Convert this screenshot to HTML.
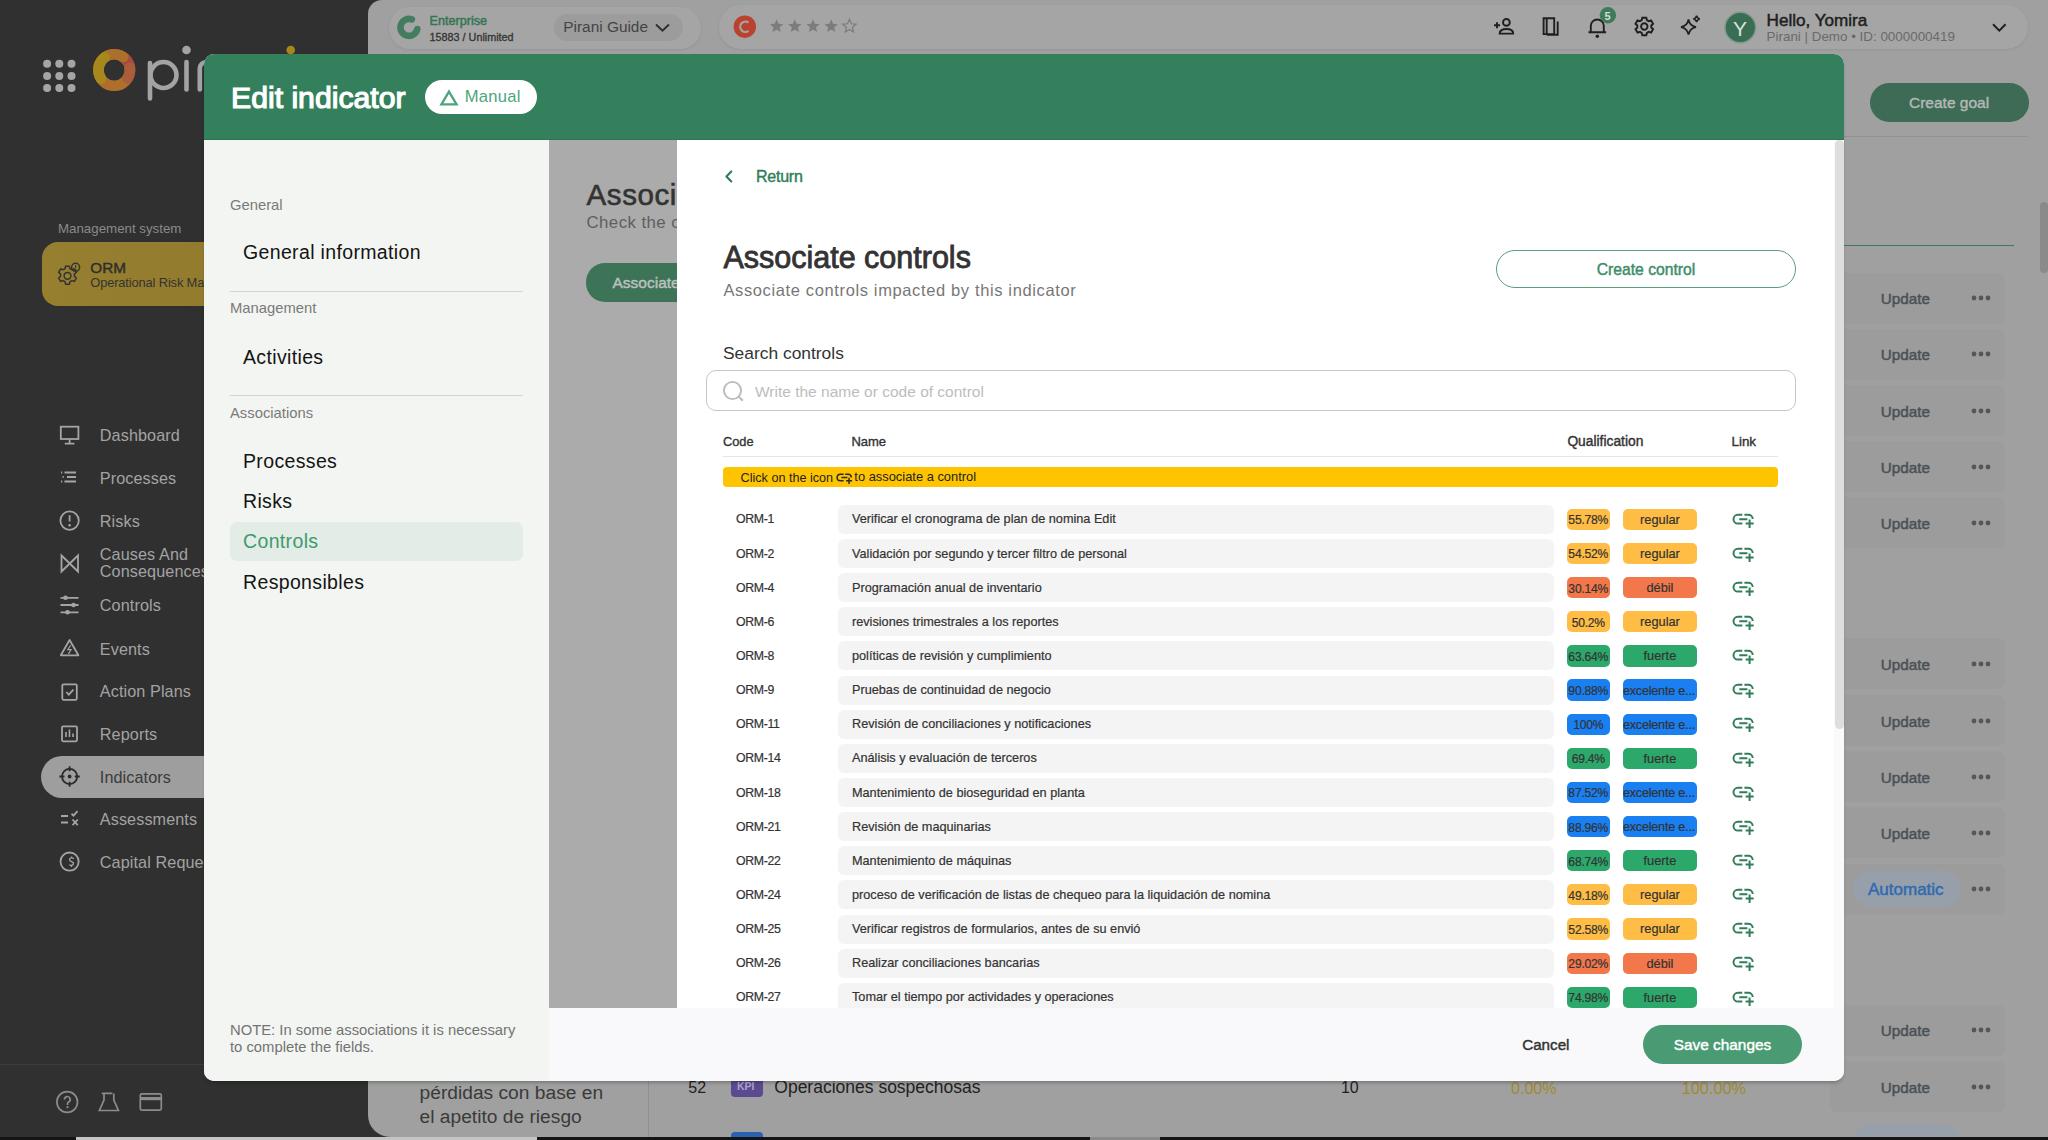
<!DOCTYPE html><html><head><meta charset="utf-8"><style>
*{box-sizing:border-box;margin:0;padding:0}
html,body{width:2048px;height:1140px;overflow:hidden}
body{position:relative;background:#303030;font-family:"Liberation Sans",sans-serif;color:#222}
.a{position:absolute;white-space:nowrap;line-height:1}
svg{position:absolute;overflow:visible}
.ctr{text-align:center}
</style></head><body>
<div class="a" style="left:0;top:0;width:380px;height:1140px;background:#303030"></div>
<svg width="2048" height="1140" style="left:0;top:0"><g fill="#a5a5a5"><circle cx="47.1" cy="63.7" r="4"/><circle cx="47.1" cy="75.9" r="4"/><circle cx="47.1" cy="88" r="4"/><circle cx="59.3" cy="63.7" r="4"/><circle cx="59.3" cy="75.9" r="4"/><circle cx="59.3" cy="88" r="4"/><circle cx="71.5" cy="63.7" r="4"/><circle cx="71.5" cy="75.9" r="4"/><circle cx="71.5" cy="88" r="4"/></g><g fill="none" stroke-width="10.6"><circle cx="114.2" cy="70" r="15.8" stroke="#ad6f2b"/><path d="M122.10 56.32A15.8 15.8 0 0 1 130.00 70.00" stroke="#a8493f" stroke-linecap="butt"/><path d="M129.85 67.80A15.8 15.8 0 0 1 127.60 78.37" stroke="#a95d3b" stroke-linecap="round"/><path d="M104.69 57.38A15.8 15.8 0 0 1 123.26 57.06" stroke="#ad6f2b" stroke-linecap="round"/><path d="M100.95 78.61A15.8 15.8 0 0 1 104.69 57.38" stroke="#a6881c" stroke-linecap="round"/></g><g fill="none" stroke="#a3a3a3" stroke-width="4.6" stroke-linecap="round"><path d="M150 63 V98.5"/><circle cx="163.5" cy="75" r="13"/><path d="M186.5 62 V89.5"/><path d="M199.8 89.5V68.5a6.5 6.5 0 0 1 6.5-6.5"/></g><circle cx="186.5" cy="50" r="4.3" fill="#a3a3a3"/><circle cx="290.7" cy="50" r="4.3" fill="#a8861c"/></svg>
<div class="a" style="left:58.0px;top:221.7px;font-size:13.3px;color:#8a8a8a;">Management system</div>
<div class="a" style="left:42px;top:242px;width:340px;height:64px;border-radius:16px;background:linear-gradient(90deg,#977f30,#8f782d)"></div>
<svg width="2048" height="400" style="left:0;top:0"><g fill="none" stroke="#333" stroke-width="1.5"><circle cx="67.5" cy="275.8" r="3.4"/><path d="M65.6 266.2h3.8l.6 2.5 1.9 1.1 2.5-.8 1.9 3.3-1.9 1.8v2.2l1.9 1.8-1.9 3.3-2.5-.8-1.9 1.1-.6 2.5h-3.8l-.6-2.5-1.9-1.1-2.5.8-1.9-3.3 1.9-1.8v-2.2l-1.9-1.8 1.9-3.3 2.5.8 1.9-1.1z"/><circle cx="75.6" cy="267.3" r="4"/></g><path d="M75.6 265.3v2.4" stroke="#333" stroke-width="1.2"/><circle cx="75.6" cy="269.2" r=".65" fill="#333"/></svg>
<div class="a" style="left:90.3px;top:260.1px;font-size:15.3px;color:#2e2e2e;-webkit-text-stroke:0.43px #2e2e2e;">ORM</div>
<div class="a" style="left:90.3px;top:277.1px;font-size:12.9px;color:#333;letter-spacing:-0.15px;">Operational Risk Management</div>
<div class="a" style="left:41.0px;top:755.5px;width:359.0px;height:42.5px;background:#9d9e9d;border-radius:21.5px;"></div>
<div class="a" style="left:99.8px;top:427.2px;font-size:16.2px;color:#a3a3a3;letter-spacing:0.1px;">Dashboard</div>
<div class="a" style="left:99.8px;top:469.6px;font-size:16.2px;color:#a3a3a3;letter-spacing:0.1px;">Processes</div>
<div class="a" style="left:99.8px;top:512.7px;font-size:16.2px;color:#a3a3a3;letter-spacing:0.1px;">Risks</div>
<div class="a" style="left:99.8px;top:597.3px;font-size:16.2px;color:#a3a3a3;letter-spacing:0.1px;">Controls</div>
<div class="a" style="left:99.8px;top:640.6px;font-size:16.2px;color:#a3a3a3;letter-spacing:0.1px;">Events</div>
<div class="a" style="left:99.8px;top:683.3px;font-size:16.2px;color:#a3a3a3;letter-spacing:0.1px;">Action Plans</div>
<div class="a" style="left:99.8px;top:725.9px;font-size:16.2px;color:#a3a3a3;letter-spacing:0.1px;">Reports</div>
<div class="a" style="left:99.8px;top:769.3px;font-size:16.2px;color:#3a3a3a;letter-spacing:0.1px;">Indicators</div>
<div class="a" style="left:99.8px;top:811.3px;font-size:16.2px;color:#a3a3a3;letter-spacing:0.1px;">Assessments</div>
<div class="a" style="left:99.8px;top:853.8px;font-size:16.2px;color:#a3a3a3;letter-spacing:0.1px;">Capital Requerimients</div>
<div class="a" style="left:99.8px;top:546.4px;font-size:16.2px;color:#a3a3a3;letter-spacing:0.1px;">Causes And</div>
<div class="a" style="left:99.8px;top:563.4px;font-size:16.2px;color:#a3a3a3;letter-spacing:0.1px;">Consequences</div>
<svg width="2048" height="1140" style="left:0;top:0"><g fill="none" stroke="#a5a5a5" stroke-width="1.8"><rect x="60.8" y="426.7" width="17.6" height="12.3"/><path d="M69.6 439v4.6M64.8 443.7h9.6"/><path d="M64.5 472.5h11.5M67 477h9M64.5 481.5h11.5" /><path d="M61 472.5h1.2M62.5 477h1.2M61 481.5h1.2"/><circle cx="69.6" cy="520.6" r="9.2"/><path d="M69.6 515.2v6.3"/><path d="M61.5 555.5v16l16.5-16v16z" stroke-linejoin="miter"/><path d="M60.5 597.8h18M60.5 605h18M60.5 612.3h18"/><path d="M69.6 640l-8.8 15.3h17.6z" stroke-linejoin="round"/><rect x="62.3" y="684.3" width="14.5" height="15.5" rx="1.2"/><path d="M66.3 692l2.5 2.6 4.6-5"/><rect x="62" y="726.3" width="15" height="15" rx="1.2"/><path d="M69.5 864.5c0 1.2 4 1.2 4-1 0-2.4-4-1.5-4-4 0-2 4-2 4-.5M71.5 856.5v2M71.5 865v2" stroke-width="1.3"/><circle cx="69.6" cy="861.6" r="9.1"/><path d="M61 816h7M61 822.5h7M72.5 819.5l5.3 5.6M77.8 819.5l-5.3 5.6M71.5 813.7l2 2 4-4.6"/></g><g stroke="#a5a5a5" stroke-width="1.6" fill="none"><path d="M66 737v-5M69.5 737v-7.5M73 737v-3.5"/></g><path d="M70.6 645.3l-2.8 4.4h3.2l-2.6 4.2" stroke="#a5a5a5" stroke-width="1.2" fill="none"/><g fill="#a5a5a5"><circle cx="69.6" cy="525.3" r="1.2"/><circle cx="65.5" cy="597.8" r="2.3"/><circle cx="73.5" cy="605" r="2.3"/><circle cx="67.5" cy="612.3" r="2.3"/></g><g fill="none" stroke="#2a2a2a" stroke-width="1.8"><circle cx="69.6" cy="776.5" r="7.6"/><path d="M69.6 766.3v5M69.6 781.7v5M59.4 776.5h5M74.8 776.5h5"/></g><circle cx="69.6" cy="776.5" r="1.9" fill="#2a2a2a"/></svg>
<div class="a" style="left:0.0px;top:1064.0px;width:368.0px;height:1.0px;background:#3d3d3d;"></div>
<svg width="2048" height="1140" style="left:0;top:0"><g fill="none" stroke="#8c8c8c" stroke-width="1.7"><circle cx="67.2" cy="1102" r="10.3"/><path d="M64.4 1099.4a2.9 2.9 0 1 1 4.2 2.6c-.9.5-1.1 1.1-1.1 2v.9"/><path d="M104 1093.5v6.5l-4.6 10.5h19l-4.6-10.5v-6.5M101.8 1093.3h10.6"/><rect x="140.3" y="1093.8" width="21" height="16.4" rx="1.6"/></g><rect x="140.3" y="1097" width="21" height="3.2" fill="#8c8c8c"/><circle cx="67.5" cy="1107.2" r="1.1" fill="#8c8c8c"/></svg>
<div class="a" style="left:368px;top:0;width:1680px;height:1137px;background:#a0a0a0;border-radius:14px 0 0 22px"></div>
<div class="a" style="left:389.0px;top:6.5px;width:311.5px;height:42.0px;background:#a5a5a5;border-radius:21px;box-shadow:0 1px 3px rgba(0,0,0,0.08)"></div>
<div class="a" style="left:718.5px;top:5.0px;width:1309.5px;height:44.0px;background:#a5a5a5;border-radius:22px;box-shadow:0 1px 3px rgba(0,0,0,0.08)"></div>
<div class="a" style="left:554.3px;top:14.3px;width:128.4px;height:26.7px;background:#9c9c9c;border-radius:14px;"></div>
<svg width="2048" height="60" style="left:0;top:0"><g fill="none" stroke="#437c5f" stroke-width="6.6" stroke-linecap="round"><path d="M417.3 29 A8.5 8.5 0 1 1 411.8 19.4"/></g><g fill="none" stroke="#2f2f2f" stroke-width="1.9"><path d="M656 24.5l6.5 6.3 6.5-6.3"/></g><circle cx="744.8" cy="26.7" r="11.2" fill="#b9432f"/><path d="M748.5 22.5a5.2 5.2 0 1 0 0 8.4" fill="none" stroke="#a5a5a5" stroke-width="2.2"/></svg>
<div class="a" style="left:429.6px;top:15.4px;font-size:12.6px;color:#327552;-webkit-text-stroke:0.45px #327552;">Enterprise</div>
<div class="a" style="left:429.6px;top:31.7px;font-size:10.8px;color:#333;-webkit-text-stroke:0.30px #333;">15883 / Unlimited</div>
<div class="a" style="left:563.3px;top:19.0px;font-size:15.4px;color:#444;">Pirani Guide</div>
<svg width="2048" height="60" style="left:0;top:0"><polygon points="776.60,19.30 778.45,23.75 783.26,24.14 779.60,27.27 780.71,31.96 776.60,29.45 772.49,31.96 773.60,27.27 769.94,24.14 774.75,23.75" fill="#7c7c7c"/><polygon points="794.80,19.30 796.65,23.75 801.46,24.14 797.80,27.27 798.91,31.96 794.80,29.45 790.69,31.96 791.80,27.27 788.14,24.14 792.95,23.75" fill="#7c7c7c"/><polygon points="813.00,19.30 814.85,23.75 819.66,24.14 816.00,27.27 817.11,31.96 813.00,29.45 808.89,31.96 810.00,27.27 806.34,24.14 811.15,23.75" fill="#7c7c7c"/><polygon points="831.20,19.30 833.05,23.75 837.86,24.14 834.20,27.27 835.31,31.96 831.20,29.45 827.09,31.96 828.20,27.27 824.54,24.14 829.35,23.75" fill="#7c7c7c"/><polygon points="849.40,19.30 851.25,23.75 856.06,24.14 852.40,27.27 853.51,31.96 849.40,29.45 845.29,31.96 846.40,27.27 842.74,24.14 847.55,23.75" fill="none" stroke="#7c7c7c" stroke-width="1.2"/></svg>
<svg width="2048" height="60" style="left:0;top:0"><g fill="none" stroke="#1f1f1f" stroke-width="1.9"><circle cx="1506.4" cy="22.4" r="3.4"/><path d="M1499.6 33.6c0-3 3-4.6 6.8-4.6s6.8 1.6 6.8 4.6z"/><path d="M1494 25.2h6M1497 22.2v6"/><path d="M1543.6 18.3h10.6v15.8h-10.6zM1546.7 18.3v15.8M1557.7 21.4v13.4h-11"/><path d="M1588.5 32.2h17.6M1590.8 32.2v-6.2a6.5 6.5 0 0 1 13 0v6.2"/><circle cx="1644.3" cy="26.5" r="3.2"/><path d="M1642.3 17.8h4l.6 2.4 1.8 1 2.4-.8 2 3.4-1.8 1.7v2l1.8 1.7-2 3.4-2.4-.8-1.8 1-.6 2.4h-4l-.6-2.4-1.8-1-2.4.8-2-3.4 1.8-1.7v-2l-1.8-1.7 2-3.4 2.4.8 1.8-1z"/><path d="M1688.5 19.5c.9 4.8 2.9 6.8 7.5 7.6-4.6.8-6.6 2.8-7.5 7.6-.9-4.8-2.9-6.8-7.5-7.6 4.6-.8 6.6-2.8 7.5-7.6z" stroke-width="1.7"/><path d="M1696.6 15.6c.4 2 1.2 2.9 3.2 3.3-2 .4-2.8 1.2-3.2 3.2-.4-2-1.2-2.8-3.2-3.2 2-.4 2.8-1.3 3.2-3.3z" stroke-width="1.5"/></g><circle cx="1597.3" cy="36.2" r="1.7" fill="#1f1f1f"/><circle cx="1607.9" cy="15.2" r="8.2" fill="#3f7a5b"/><circle cx="1740.3" cy="27.5" r="15.3" fill="#3b6d54" stroke="#7d9a8b" stroke-width="1.4"/><g fill="none" stroke="#1f1f1f" stroke-width="2"><path d="M1993 24.3l6.3 6.3 6.3-6.3"/></g></svg>
<div class="a" style="left:1604.6px;top:10.8px;font-size:11px;color:#d0ddd5;font-weight:bold;">5</div>
<div class="a" style="left:1733.0px;top:17.6px;font-size:21px;color:#d6e2dc;">Y</div>
<div class="a" style="left:1766.6px;top:12.4px;font-size:17.1px;color:#1e1e1e;-webkit-text-stroke:0.48px #1e1e1e;">Hello, Yomira</div>
<div class="a" style="left:1766.6px;top:29.5px;font-size:13.4px;color:#6a6a6a;">Pirani | Demo • ID: 0000000419</div>
<div class="a" style="left:1870.3px;top:83.2px;width:158.4px;height:38.6px;background:#3e6b55;border-radius:19.3px;"></div>
<div class="a" style="left:1909.0px;top:94.7px;font-size:15.5px;color:#b3b8b5;-webkit-text-stroke:0.43px #b3b8b5;">Create goal</div>
<div class="a" style="left:1844.0px;top:135.8px;width:184.0px;height:1.0px;background:#929292;"></div>
<div class="a" style="left:1844.0px;top:244.5px;width:169.7px;height:1.8px;background:#3f7a5c;"></div>
<div class="a" style="left:2040.0px;top:202.0px;width:8.0px;height:71.0px;background:#8a8a8a;border-radius:4px;"></div>
<div class="a" style="left:1830.0px;top:272.5px;width:174.5px;height:51.0px;background:rgba(0,0,0,0.018);border-radius:7px;"></div>
<div class="a" style="left:1830.0px;top:328.5px;width:174.5px;height:51.0px;background:rgba(0,0,0,0.018);border-radius:7px;"></div>
<div class="a" style="left:1830.0px;top:385.0px;width:174.5px;height:51.0px;background:rgba(0,0,0,0.018);border-radius:7px;"></div>
<div class="a" style="left:1830.0px;top:441.0px;width:174.5px;height:51.0px;background:rgba(0,0,0,0.018);border-radius:7px;"></div>
<div class="a" style="left:1830.0px;top:497.0px;width:174.5px;height:51.0px;background:rgba(0,0,0,0.018);border-radius:7px;"></div>
<div class="a" style="left:1830.0px;top:638.4px;width:174.5px;height:51.0px;background:rgba(0,0,0,0.018);border-radius:7px;"></div>
<div class="a" style="left:1830.0px;top:695.3px;width:174.5px;height:51.0px;background:rgba(0,0,0,0.018);border-radius:7px;"></div>
<div class="a" style="left:1830.0px;top:751.2px;width:174.5px;height:51.0px;background:rgba(0,0,0,0.018);border-radius:7px;"></div>
<div class="a" style="left:1830.0px;top:807.1px;width:174.5px;height:51.0px;background:rgba(0,0,0,0.018);border-radius:7px;"></div>
<div class="a" style="left:1830.0px;top:863.5px;width:174.5px;height:51.0px;background:rgba(0,0,0,0.018);border-radius:7px;"></div>
<div class="a" style="left:1830.0px;top:1004.8px;width:174.5px;height:51.0px;background:rgba(0,0,0,0.018);border-radius:7px;"></div>
<div class="a" style="left:1830.0px;top:1061.3px;width:174.5px;height:51.0px;background:rgba(0,0,0,0.018);border-radius:7px;"></div>
<div class="a" style="left:1880.8px;top:291.0px;font-size:15.3px;color:#4b5157;-webkit-text-stroke:0.5px #4b5157;">Update</div>
<div class="a" style="left:1880.8px;top:347.0px;font-size:15.3px;color:#4b5157;-webkit-text-stroke:0.5px #4b5157;">Update</div>
<div class="a" style="left:1880.8px;top:403.5px;font-size:15.3px;color:#4b5157;-webkit-text-stroke:0.5px #4b5157;">Update</div>
<div class="a" style="left:1880.8px;top:459.5px;font-size:15.3px;color:#4b5157;-webkit-text-stroke:0.5px #4b5157;">Update</div>
<div class="a" style="left:1880.8px;top:515.5px;font-size:15.3px;color:#4b5157;-webkit-text-stroke:0.5px #4b5157;">Update</div>
<div class="a" style="left:1880.8px;top:656.9px;font-size:15.3px;color:#4b5157;-webkit-text-stroke:0.5px #4b5157;">Update</div>
<div class="a" style="left:1880.8px;top:713.8px;font-size:15.3px;color:#4b5157;-webkit-text-stroke:0.5px #4b5157;">Update</div>
<div class="a" style="left:1880.8px;top:769.7px;font-size:15.3px;color:#4b5157;-webkit-text-stroke:0.5px #4b5157;">Update</div>
<div class="a" style="left:1880.8px;top:825.6px;font-size:15.3px;color:#4b5157;-webkit-text-stroke:0.5px #4b5157;">Update</div>
<div class="a" style="left:1880.8px;top:1023.3px;font-size:15.3px;color:#4b5157;-webkit-text-stroke:0.5px #4b5157;">Update</div>
<div class="a" style="left:1880.8px;top:1079.8px;font-size:15.3px;color:#4b5157;-webkit-text-stroke:0.5px #4b5157;">Update</div>
<svg width="30" height="10" style="left:1970px;top:293.0px"><g fill="#52575c"><circle cx="4" cy="5" r="2.4"/><circle cx="11" cy="5" r="2.4"/><circle cx="18" cy="5" r="2.4"/></g></svg>
<svg width="30" height="10" style="left:1970px;top:349.0px"><g fill="#52575c"><circle cx="4" cy="5" r="2.4"/><circle cx="11" cy="5" r="2.4"/><circle cx="18" cy="5" r="2.4"/></g></svg>
<svg width="30" height="10" style="left:1970px;top:405.5px"><g fill="#52575c"><circle cx="4" cy="5" r="2.4"/><circle cx="11" cy="5" r="2.4"/><circle cx="18" cy="5" r="2.4"/></g></svg>
<svg width="30" height="10" style="left:1970px;top:461.5px"><g fill="#52575c"><circle cx="4" cy="5" r="2.4"/><circle cx="11" cy="5" r="2.4"/><circle cx="18" cy="5" r="2.4"/></g></svg>
<svg width="30" height="10" style="left:1970px;top:517.5px"><g fill="#52575c"><circle cx="4" cy="5" r="2.4"/><circle cx="11" cy="5" r="2.4"/><circle cx="18" cy="5" r="2.4"/></g></svg>
<svg width="30" height="10" style="left:1970px;top:658.9px"><g fill="#52575c"><circle cx="4" cy="5" r="2.4"/><circle cx="11" cy="5" r="2.4"/><circle cx="18" cy="5" r="2.4"/></g></svg>
<svg width="30" height="10" style="left:1970px;top:715.8px"><g fill="#52575c"><circle cx="4" cy="5" r="2.4"/><circle cx="11" cy="5" r="2.4"/><circle cx="18" cy="5" r="2.4"/></g></svg>
<svg width="30" height="10" style="left:1970px;top:771.7px"><g fill="#52575c"><circle cx="4" cy="5" r="2.4"/><circle cx="11" cy="5" r="2.4"/><circle cx="18" cy="5" r="2.4"/></g></svg>
<svg width="30" height="10" style="left:1970px;top:827.6px"><g fill="#52575c"><circle cx="4" cy="5" r="2.4"/><circle cx="11" cy="5" r="2.4"/><circle cx="18" cy="5" r="2.4"/></g></svg>
<svg width="30" height="10" style="left:1970px;top:884.0px"><g fill="#52575c"><circle cx="4" cy="5" r="2.4"/><circle cx="11" cy="5" r="2.4"/><circle cx="18" cy="5" r="2.4"/></g></svg>
<svg width="30" height="10" style="left:1970px;top:1025.3px"><g fill="#52575c"><circle cx="4" cy="5" r="2.4"/><circle cx="11" cy="5" r="2.4"/><circle cx="18" cy="5" r="2.4"/></g></svg>
<svg width="30" height="10" style="left:1970px;top:1081.8px"><g fill="#52575c"><circle cx="4" cy="5" r="2.4"/><circle cx="11" cy="5" r="2.4"/><circle cx="18" cy="5" r="2.4"/></g></svg>
<div class="a" style="left:1852.5px;top:871.0px;width:107.5px;height:36.0px;background:#97a0aa;border-radius:18px;"></div>
<div class="a" style="left:1868.0px;top:880.7px;font-size:17px;color:#2f6bb0;-webkit-text-stroke:0.48px #2f6bb0;">Automatic</div>
<div class="a" style="left:1852.5px;top:1124.0px;width:107.5px;height:36.0px;background:#97a0aa;border-radius:18px;"></div>
<div class="a" style="left:648.0px;top:1060.0px;width:1.0px;height:77.0px;background:#8f8f8f;"></div>
<div class="a" style="left:419.6px;top:1083.4px;font-size:19.2px;color:#3a3a3a;">pérdidas con base en</div>
<div class="a" style="left:419.6px;top:1106.9px;font-size:19.2px;color:#3a3a3a;">el apetito de riesgo</div>
<div class="a" style="left:688.3px;top:1079.7px;font-size:16px;color:#222;">52</div>
<div class="a" style="left:730.5px;top:1072.0px;width:32.5px;height:25.0px;background:#5b4a8f;border-radius:4px;"></div>
<div class="a" style="left:737.0px;top:1080.9px;font-size:10.5px;color:#ada3cc;font-weight:bold;">KPI</div>
<div class="a" style="left:774.3px;top:1078.5px;font-size:17.5px;color:#222;">Operaciones sospechosas</div>
<div class="a" style="left:1340.9px;top:1079.7px;font-size:16px;color:#222;">10</div>
<div class="a" style="left:1511.0px;top:1079.7px;font-size:16.1px;color:#a08a30;">0.00%</div>
<div class="a" style="left:1681.7px;top:1079.5px;font-size:16.3px;color:#a08a30;">100.00%</div>
<div class="a" style="left:730.5px;top:1131.8px;width:32.5px;height:18.2px;background:#2a62b0;border-radius:4px;"></div>
<div class="a" style="left:0;top:1137px;width:2048px;height:3px;background:#151515"></div>
<div class="a" style="left:76.0px;top:1137.0px;width:461.0px;height:3.0px;background:#c4c4c4;"></div>
<div class="a" style="left:1090.0px;top:1137.0px;width:70.0px;height:3.0px;background:#8a8a8a;"></div>
<div class="a" style="left:204px;top:54px;width:1640px;height:1027px;border-radius:10px;overflow:hidden;background:#f9f9fb;box-shadow:0 3px 4px -2px rgba(0,0,0,0.35)">
<div class="a" style="left:0.0px;top:0.0px;width:1640.0px;height:86.0px;background:#34805c;"></div>
<div class="a" style="left:0.0px;top:85.0px;width:1640.0px;height:1.0px;background:#2a7752;"></div>
<div class="a" style="left:27.0px;top:28.6px;font-size:30.2px;color:#fff;-webkit-text-stroke:1.2px #fff;">Edit indicator</div>
<div class="a" style="left:221.0px;top:26.0px;width:112.0px;height:34.0px;background:#fff;border-radius:17px;"></div>
<svg width="20" height="18" style="left:236px;top:35px" viewBox="0 0 20 18"><path d="M9 2.6L16.6 15.4H1.4z" fill="none" stroke="#4ea57c" stroke-width="2.3"/></svg>
<div class="a" style="left:260.7px;top:35.3px;font-size:16.6px;color:#4ea57c;letter-spacing:0.25px;">Manual</div>
<div class="a" style="left:0.0px;top:86.0px;width:345.0px;height:941.0px;background:#f3f5f2;"></div>
<div class="a" style="left:26.0px;top:143.5px;font-size:14.8px;color:#7a7a7a;">General</div>
<div class="a" style="left:26.0px;top:247.2px;font-size:14.8px;color:#7a7a7a;">Management</div>
<div class="a" style="left:26.0px;top:352.3px;font-size:14.8px;color:#7a7a7a;">Associations</div>
<div class="a" style="left:26.0px;top:237.0px;width:293.0px;height:1.0px;background:#d3d5d2;"></div>
<div class="a" style="left:26.0px;top:341.0px;width:293.0px;height:1.0px;background:#d3d5d2;"></div>
<div class="a" style="left:26.0px;top:468.4px;width:293.0px;height:38.2px;background:#e3ece6;border-radius:7px;"></div>
<div class="a" style="left:39.0px;top:188.8px;font-size:19.5px;color:#141414;letter-spacing:0.35px;">General information</div>
<div class="a" style="left:39.0px;top:293.6px;font-size:19.5px;color:#141414;letter-spacing:0.35px;">Activities</div>
<div class="a" style="left:39.0px;top:398.2px;font-size:19.5px;color:#141414;letter-spacing:0.35px;">Processes</div>
<div class="a" style="left:39.0px;top:438.1px;font-size:19.5px;color:#141414;letter-spacing:0.35px;">Risks</div>
<div class="a" style="left:39.0px;top:478.3px;font-size:19.5px;color:#3f9a6d;letter-spacing:0.35px;">Controls</div>
<div class="a" style="left:39.0px;top:518.7px;font-size:19.5px;color:#141414;letter-spacing:0.35px;">Responsibles</div>
<div class="a" style="left:26.0px;top:969.2px;font-size:14.8px;color:#737373;">NOTE: In some associations it is necessary</div>
<div class="a" style="left:26.0px;top:985.8px;font-size:14.8px;color:#737373;">to complete the fields.</div>
<div class="a" style="left:345.0px;top:86.0px;width:128.0px;height:868.0px;background:#aaabaa;"></div>
<div class="a" style="left:345px;top:86px;width:128px;height:868px;overflow:hidden">
<div class="a" style="left:37.5px;top:40.4px;font-size:29.5px;color:#333;letter-spacing:0.6px;-webkit-text-stroke:0.6px #333;">Associate controls</div>
<div class="a" style="left:37.5px;top:74.8px;font-size:16.8px;color:#5f5f5f;letter-spacing:0.45px;">Check the controls associated</div>
<div class="a" style="left:37.0px;top:123.4px;width:220.0px;height:38.4px;background:#3d7457;border-radius:19px;"></div>
<div class="a" style="left:63.5px;top:134.5px;font-size:15.5px;color:#bcc1be;-webkit-text-stroke:0.43px #bcc1be;">Associate control</div>
</div>
<div class="a" style="left:473px;top:86px;width:1157px;height:868px;background:#fff;overflow:hidden">
<svg width="14" height="16" style="left:45px;top:28px" viewBox="0 0 14 16"><path d="M9.3 3.4L4.4 8.4l4.9 5" fill="none" stroke="#2e7d57" stroke-width="2.1" stroke-linecap="round" stroke-linejoin="round"/></svg>
<div class="a" style="left:79.0px;top:28.8px;font-size:16px;color:#2e7d57;letter-spacing:-0.25px;-webkit-text-stroke:0.4px #2e7d57;">Return</div>
<div class="a" style="left:46.4px;top:101.5px;font-size:30.5px;color:#333;-webkit-text-stroke:0.85px #333;">Associate controls</div>
<div class="a" style="left:46.4px;top:141.5px;font-size:16.5px;color:#777;letter-spacing:0.63px;">Associate controls impacted by this indicator</div>
<div class="a" style="left:819.0px;top:110.0px;width:300.0px;height:38.0px;background:#fff;border-radius:19px;border:1.2px solid #5a9e7d"></div>
<div class="a" style="left:819.0px;top:122.1px;font-size:15.7px;color:#3c8d68;-webkit-text-stroke:0.44px #3c8d68;width:300px;text-align:center;">Create control</div>
<div class="a" style="left:46.0px;top:205.4px;font-size:17.4px;color:#333;">Search controls</div>
<div class="a" style="left:28.8px;top:229.5px;width:1090.0px;height:41.5px;background:#fff;border-radius:10px;border:1px solid #c6c6c6"></div>
<svg width="26" height="26" style="left:44px;top:239px" viewBox="0 0 26 26"><circle cx="11.5" cy="11.5" r="8.6" fill="none" stroke="#bcbcbc" stroke-width="1.9"/><path d="M17.8 17.8l4 4" stroke="#bcbcbc" stroke-width="2.1"/></svg>
<div class="a" style="left:78.0px;top:243.7px;font-size:15.5px;color:#bdbdbd;">Write the name or code of control</div>
<div class="a" style="left:46.0px;top:296.2px;font-size:12.8px;color:#333;-webkit-text-stroke:0.36px #333;">Code</div>
<div class="a" style="left:174.4px;top:295.4px;font-size:13px;color:#333;-webkit-text-stroke:0.36px #333;">Name</div>
<div class="a" style="left:890.4px;top:295.4px;font-size:13.8px;color:#333;-webkit-text-stroke:0.39px #333;">Qualification</div>
<div class="a" style="left:1054.5px;top:295.1px;font-size:13.4px;color:#333;-webkit-text-stroke:0.38px #333;">Link</div>
<div class="a" style="left:46.0px;top:316.0px;width:1055.0px;height:1.3px;background:#e6e6e6;"></div>
<div class="a" style="left:45.5px;top:327.0px;width:1055.5px;height:19.6px;background:#fec400;border-radius:4px;"></div>
<div class="a" style="left:63.6px;top:331.5px;font-size:12.6px;color:#222;">Click on the icon</div>
<div class="a" style="left:177.3px;top:331.3px;font-size:12.9px;color:#222;">to associate a control</div>
<svg width="16.3" height="12.6" style="left:158.8px;top:332.7px" viewBox="0 0 22 17"><path d="M10.3 1.8H5.9a4.4 4.4 0 0 0 0 8.8h4.4M12.4 1.8h3.9a4.4 4.4 0 0 1 4.4 4.2M7.3 6.2h8.1M17.6 6.4v8.6M13.6 10.5h8.1" fill="none" stroke="#2a2a2a" stroke-width="2" stroke-linecap="butt"/></svg>
<div class="a" style="left:58.9px;top:373.4px;font-size:12.3px;color:#333;letter-spacing:-0.3px;-webkit-text-stroke:0.2px #333;">ORM-1</div>
<div class="a" style="left:161.2px;top:364.8px;width:715.5px;height:29.0px;background:#f4f4f4;border-radius:6px;"></div>
<div class="a" style="left:175.0px;top:373.4px;font-size:12.7px;color:#333;-webkit-text-stroke:0.2px #333;">Verificar el cronograma de plan de nomina Edit</div>
<div class="a" style="left:889.7px;top:368.7px;width:43.2px;height:21.3px;background:#ffbd45;border-radius:5px;"></div>
<div class="a" style="left:889.7px;top:374.3px;font-size:12.1px;color:#333;width:43.2px;text-align:center;letter-spacing:-0.2px;-webkit-text-stroke:0.2px #333;">55.78%</div>
<div class="a" style="left:945.9px;top:368.7px;width:74.1px;height:21.3px;background:#ffbd45;border-radius:5px;"></div>
<div class="a" style="left:945.9px;top:373.7px;font-size:12.8px;color:#333;width:74.1px;text-align:center;-webkit-text-stroke:0.2px #333;">regular</div>
<svg width="22" height="17" style="left:1055.1px;top:372.5px" viewBox="0 0 22 17"><path d="M10.3 1.8H5.9a4.4 4.4 0 0 0 0 8.8h4.4M12.4 1.8h3.9a4.4 4.4 0 0 1 4.4 4.2M7.3 6.2h8.1M17.6 6.4v8.6M13.6 10.5h8.1" fill="none" stroke="#337e5a" stroke-width="2" stroke-linecap="butt"/></svg>
<div class="a" style="left:58.9px;top:407.5px;font-size:12.3px;color:#333;letter-spacing:-0.3px;-webkit-text-stroke:0.2px #333;">ORM-2</div>
<div class="a" style="left:161.2px;top:398.9px;width:715.5px;height:29.0px;background:#f4f4f4;border-radius:6px;"></div>
<div class="a" style="left:175.0px;top:407.6px;font-size:12.7px;color:#333;-webkit-text-stroke:0.2px #333;">Validación por segundo y tercer filtro de personal</div>
<div class="a" style="left:889.7px;top:402.8px;width:43.2px;height:21.3px;background:#ffbd45;border-radius:5px;"></div>
<div class="a" style="left:889.7px;top:408.4px;font-size:12.1px;color:#333;width:43.2px;text-align:center;letter-spacing:-0.2px;-webkit-text-stroke:0.2px #333;">54.52%</div>
<div class="a" style="left:945.9px;top:402.8px;width:74.1px;height:21.3px;background:#ffbd45;border-radius:5px;"></div>
<div class="a" style="left:945.9px;top:407.8px;font-size:12.8px;color:#333;width:74.1px;text-align:center;-webkit-text-stroke:0.2px #333;">regular</div>
<svg width="22" height="17" style="left:1055.1px;top:406.6px" viewBox="0 0 22 17"><path d="M10.3 1.8H5.9a4.4 4.4 0 0 0 0 8.8h4.4M12.4 1.8h3.9a4.4 4.4 0 0 1 4.4 4.2M7.3 6.2h8.1M17.6 6.4v8.6M13.6 10.5h8.1" fill="none" stroke="#337e5a" stroke-width="2" stroke-linecap="butt"/></svg>
<div class="a" style="left:58.9px;top:441.7px;font-size:12.3px;color:#333;letter-spacing:-0.3px;-webkit-text-stroke:0.2px #333;">ORM-4</div>
<div class="a" style="left:161.2px;top:433.1px;width:715.5px;height:29.0px;background:#f4f4f4;border-radius:6px;"></div>
<div class="a" style="left:175.0px;top:441.7px;font-size:12.7px;color:#333;-webkit-text-stroke:0.2px #333;">Programación anual de inventario</div>
<div class="a" style="left:889.7px;top:437.0px;width:43.2px;height:21.3px;background:#f2784b;border-radius:5px;"></div>
<div class="a" style="left:889.7px;top:442.5px;font-size:12.1px;color:#333;width:43.2px;text-align:center;letter-spacing:-0.2px;-webkit-text-stroke:0.2px #333;">30.14%</div>
<div class="a" style="left:945.9px;top:437.0px;width:74.1px;height:21.3px;background:#f2784b;border-radius:5px;"></div>
<div class="a" style="left:945.9px;top:441.9px;font-size:12.8px;color:#333;width:74.1px;text-align:center;-webkit-text-stroke:0.2px #333;">débil</div>
<svg width="22" height="17" style="left:1055.1px;top:440.8px" viewBox="0 0 22 17"><path d="M10.3 1.8H5.9a4.4 4.4 0 0 0 0 8.8h4.4M12.4 1.8h3.9a4.4 4.4 0 0 1 4.4 4.2M7.3 6.2h8.1M17.6 6.4v8.6M13.6 10.5h8.1" fill="none" stroke="#337e5a" stroke-width="2" stroke-linecap="butt"/></svg>
<div class="a" style="left:58.9px;top:475.8px;font-size:12.3px;color:#333;letter-spacing:-0.3px;-webkit-text-stroke:0.2px #333;">ORM-6</div>
<div class="a" style="left:161.2px;top:467.2px;width:715.5px;height:29.0px;background:#f4f4f4;border-radius:6px;"></div>
<div class="a" style="left:175.0px;top:475.9px;font-size:12.7px;color:#333;-webkit-text-stroke:0.2px #333;">revisiones trimestrales a los reportes</div>
<div class="a" style="left:889.7px;top:471.1px;width:43.2px;height:21.3px;background:#ffbd45;border-radius:5px;"></div>
<div class="a" style="left:889.7px;top:476.7px;font-size:12.1px;color:#333;width:43.2px;text-align:center;letter-spacing:-0.2px;-webkit-text-stroke:0.2px #333;">50.2%</div>
<div class="a" style="left:945.9px;top:471.1px;width:74.1px;height:21.3px;background:#ffbd45;border-radius:5px;"></div>
<div class="a" style="left:945.9px;top:476.1px;font-size:12.8px;color:#333;width:74.1px;text-align:center;-webkit-text-stroke:0.2px #333;">regular</div>
<svg width="22" height="17" style="left:1055.1px;top:474.9px" viewBox="0 0 22 17"><path d="M10.3 1.8H5.9a4.4 4.4 0 0 0 0 8.8h4.4M12.4 1.8h3.9a4.4 4.4 0 0 1 4.4 4.2M7.3 6.2h8.1M17.6 6.4v8.6M13.6 10.5h8.1" fill="none" stroke="#337e5a" stroke-width="2" stroke-linecap="butt"/></svg>
<div class="a" style="left:58.9px;top:509.9px;font-size:12.3px;color:#333;letter-spacing:-0.3px;-webkit-text-stroke:0.2px #333;">ORM-8</div>
<div class="a" style="left:161.2px;top:501.4px;width:715.5px;height:29.0px;background:#f4f4f4;border-radius:6px;"></div>
<div class="a" style="left:175.0px;top:510.0px;font-size:12.7px;color:#333;-webkit-text-stroke:0.2px #333;">políticas de revisión y cumplimiento</div>
<div class="a" style="left:889.7px;top:505.3px;width:43.2px;height:21.3px;background:#2ca86a;border-radius:5px;"></div>
<div class="a" style="left:889.7px;top:510.8px;font-size:12.1px;color:#333;width:43.2px;text-align:center;letter-spacing:-0.2px;-webkit-text-stroke:0.2px #333;">63.64%</div>
<div class="a" style="left:945.9px;top:505.3px;width:74.1px;height:21.3px;background:#2ca86a;border-radius:5px;"></div>
<div class="a" style="left:945.9px;top:510.2px;font-size:12.8px;color:#333;width:74.1px;text-align:center;-webkit-text-stroke:0.2px #333;">fuerte</div>
<svg width="22" height="17" style="left:1055.1px;top:509.1px" viewBox="0 0 22 17"><path d="M10.3 1.8H5.9a4.4 4.4 0 0 0 0 8.8h4.4M12.4 1.8h3.9a4.4 4.4 0 0 1 4.4 4.2M7.3 6.2h8.1M17.6 6.4v8.6M13.6 10.5h8.1" fill="none" stroke="#337e5a" stroke-width="2" stroke-linecap="butt"/></svg>
<div class="a" style="left:58.9px;top:544.1px;font-size:12.3px;color:#333;letter-spacing:-0.3px;-webkit-text-stroke:0.2px #333;">ORM-9</div>
<div class="a" style="left:161.2px;top:535.5px;width:715.5px;height:29.0px;background:#f4f4f4;border-radius:6px;"></div>
<div class="a" style="left:175.0px;top:544.1px;font-size:12.7px;color:#333;-webkit-text-stroke:0.2px #333;">Pruebas de continuidad de negocio</div>
<div class="a" style="left:889.7px;top:539.4px;width:43.2px;height:21.3px;background:#1a7ff0;border-radius:5px;"></div>
<div class="a" style="left:889.7px;top:545.0px;font-size:12.1px;color:#333;width:43.2px;text-align:center;letter-spacing:-0.2px;-webkit-text-stroke:0.2px #333;">90.88%</div>
<div class="a" style="left:945.9px;top:539.4px;width:74.1px;height:21.3px;background:#1a7ff0;border-radius:5px;"></div>
<div class="a" style="left:945.9px;top:544.5px;font-size:12.6px;color:#333;width:74.1px;overflow:hidden;letter-spacing:-0.2px;-webkit-text-stroke:0.2px #333;">excelente e...</div>
<svg width="22" height="17" style="left:1055.1px;top:543.2px" viewBox="0 0 22 17"><path d="M10.3 1.8H5.9a4.4 4.4 0 0 0 0 8.8h4.4M12.4 1.8h3.9a4.4 4.4 0 0 1 4.4 4.2M7.3 6.2h8.1M17.6 6.4v8.6M13.6 10.5h8.1" fill="none" stroke="#337e5a" stroke-width="2" stroke-linecap="butt"/></svg>
<div class="a" style="left:58.9px;top:578.2px;font-size:12.3px;color:#333;letter-spacing:-0.3px;-webkit-text-stroke:0.2px #333;">ORM-11</div>
<div class="a" style="left:161.2px;top:569.6px;width:715.5px;height:29.0px;background:#f4f4f4;border-radius:6px;"></div>
<div class="a" style="left:175.0px;top:578.3px;font-size:12.7px;color:#333;-webkit-text-stroke:0.2px #333;">Revisión de conciliaciones y notificaciones</div>
<div class="a" style="left:889.7px;top:573.5px;width:43.2px;height:21.3px;background:#1a7ff0;border-radius:5px;"></div>
<div class="a" style="left:889.7px;top:579.1px;font-size:12.1px;color:#333;width:43.2px;text-align:center;letter-spacing:-0.2px;-webkit-text-stroke:0.2px #333;">100%</div>
<div class="a" style="left:945.9px;top:573.5px;width:74.1px;height:21.3px;background:#1a7ff0;border-radius:5px;"></div>
<div class="a" style="left:945.9px;top:578.7px;font-size:12.6px;color:#333;width:74.1px;overflow:hidden;letter-spacing:-0.2px;-webkit-text-stroke:0.2px #333;">excelente e...</div>
<svg width="22" height="17" style="left:1055.1px;top:577.3px" viewBox="0 0 22 17"><path d="M10.3 1.8H5.9a4.4 4.4 0 0 0 0 8.8h4.4M12.4 1.8h3.9a4.4 4.4 0 0 1 4.4 4.2M7.3 6.2h8.1M17.6 6.4v8.6M13.6 10.5h8.1" fill="none" stroke="#337e5a" stroke-width="2" stroke-linecap="butt"/></svg>
<div class="a" style="left:58.9px;top:612.4px;font-size:12.3px;color:#333;letter-spacing:-0.3px;-webkit-text-stroke:0.2px #333;">ORM-14</div>
<div class="a" style="left:161.2px;top:603.8px;width:715.5px;height:29.0px;background:#f4f4f4;border-radius:6px;"></div>
<div class="a" style="left:175.0px;top:612.4px;font-size:12.7px;color:#333;-webkit-text-stroke:0.2px #333;">Análisis y evaluación de terceros</div>
<div class="a" style="left:889.7px;top:607.7px;width:43.2px;height:21.3px;background:#2ca86a;border-radius:5px;"></div>
<div class="a" style="left:889.7px;top:613.2px;font-size:12.1px;color:#333;width:43.2px;text-align:center;letter-spacing:-0.2px;-webkit-text-stroke:0.2px #333;">69.4%</div>
<div class="a" style="left:945.9px;top:607.7px;width:74.1px;height:21.3px;background:#2ca86a;border-radius:5px;"></div>
<div class="a" style="left:945.9px;top:612.6px;font-size:12.8px;color:#333;width:74.1px;text-align:center;-webkit-text-stroke:0.2px #333;">fuerte</div>
<svg width="22" height="17" style="left:1055.1px;top:611.5px" viewBox="0 0 22 17"><path d="M10.3 1.8H5.9a4.4 4.4 0 0 0 0 8.8h4.4M12.4 1.8h3.9a4.4 4.4 0 0 1 4.4 4.2M7.3 6.2h8.1M17.6 6.4v8.6M13.6 10.5h8.1" fill="none" stroke="#337e5a" stroke-width="2" stroke-linecap="butt"/></svg>
<div class="a" style="left:58.9px;top:646.5px;font-size:12.3px;color:#333;letter-spacing:-0.3px;-webkit-text-stroke:0.2px #333;">ORM-18</div>
<div class="a" style="left:161.2px;top:637.9px;width:715.5px;height:29.0px;background:#f4f4f4;border-radius:6px;"></div>
<div class="a" style="left:175.0px;top:646.6px;font-size:12.7px;color:#333;-webkit-text-stroke:0.2px #333;">Mantenimiento de bioseguridad en planta</div>
<div class="a" style="left:889.7px;top:641.8px;width:43.2px;height:21.3px;background:#1a7ff0;border-radius:5px;"></div>
<div class="a" style="left:889.7px;top:647.4px;font-size:12.1px;color:#333;width:43.2px;text-align:center;letter-spacing:-0.2px;-webkit-text-stroke:0.2px #333;">87.52%</div>
<div class="a" style="left:945.9px;top:641.8px;width:74.1px;height:21.3px;background:#1a7ff0;border-radius:5px;"></div>
<div class="a" style="left:945.9px;top:646.9px;font-size:12.6px;color:#333;width:74.1px;overflow:hidden;letter-spacing:-0.2px;-webkit-text-stroke:0.2px #333;">excelente e...</div>
<svg width="22" height="17" style="left:1055.1px;top:645.6px" viewBox="0 0 22 17"><path d="M10.3 1.8H5.9a4.4 4.4 0 0 0 0 8.8h4.4M12.4 1.8h3.9a4.4 4.4 0 0 1 4.4 4.2M7.3 6.2h8.1M17.6 6.4v8.6M13.6 10.5h8.1" fill="none" stroke="#337e5a" stroke-width="2" stroke-linecap="butt"/></svg>
<div class="a" style="left:58.9px;top:680.6px;font-size:12.3px;color:#333;letter-spacing:-0.3px;-webkit-text-stroke:0.2px #333;">ORM-21</div>
<div class="a" style="left:161.2px;top:672.1px;width:715.5px;height:29.0px;background:#f4f4f4;border-radius:6px;"></div>
<div class="a" style="left:175.0px;top:680.7px;font-size:12.7px;color:#333;-webkit-text-stroke:0.2px #333;">Revisión de maquinarias</div>
<div class="a" style="left:889.7px;top:676.0px;width:43.2px;height:21.3px;background:#1a7ff0;border-radius:5px;"></div>
<div class="a" style="left:889.7px;top:681.5px;font-size:12.1px;color:#333;width:43.2px;text-align:center;letter-spacing:-0.2px;-webkit-text-stroke:0.2px #333;">88.96%</div>
<div class="a" style="left:945.9px;top:676.0px;width:74.1px;height:21.3px;background:#1a7ff0;border-radius:5px;"></div>
<div class="a" style="left:945.9px;top:681.1px;font-size:12.6px;color:#333;width:74.1px;overflow:hidden;letter-spacing:-0.2px;-webkit-text-stroke:0.2px #333;">excelente e...</div>
<svg width="22" height="17" style="left:1055.1px;top:679.8px" viewBox="0 0 22 17"><path d="M10.3 1.8H5.9a4.4 4.4 0 0 0 0 8.8h4.4M12.4 1.8h3.9a4.4 4.4 0 0 1 4.4 4.2M7.3 6.2h8.1M17.6 6.4v8.6M13.6 10.5h8.1" fill="none" stroke="#337e5a" stroke-width="2" stroke-linecap="butt"/></svg>
<div class="a" style="left:58.9px;top:714.8px;font-size:12.3px;color:#333;letter-spacing:-0.3px;-webkit-text-stroke:0.2px #333;">ORM-22</div>
<div class="a" style="left:161.2px;top:706.2px;width:715.5px;height:29.0px;background:#f4f4f4;border-radius:6px;"></div>
<div class="a" style="left:175.0px;top:714.8px;font-size:12.7px;color:#333;-webkit-text-stroke:0.2px #333;">Mantenimiento de máquinas</div>
<div class="a" style="left:889.7px;top:710.1px;width:43.2px;height:21.3px;background:#2ca86a;border-radius:5px;"></div>
<div class="a" style="left:889.7px;top:715.7px;font-size:12.1px;color:#333;width:43.2px;text-align:center;letter-spacing:-0.2px;-webkit-text-stroke:0.2px #333;">68.74%</div>
<div class="a" style="left:945.9px;top:710.1px;width:74.1px;height:21.3px;background:#2ca86a;border-radius:5px;"></div>
<div class="a" style="left:945.9px;top:715.1px;font-size:12.8px;color:#333;width:74.1px;text-align:center;-webkit-text-stroke:0.2px #333;">fuerte</div>
<svg width="22" height="17" style="left:1055.1px;top:713.9px" viewBox="0 0 22 17"><path d="M10.3 1.8H5.9a4.4 4.4 0 0 0 0 8.8h4.4M12.4 1.8h3.9a4.4 4.4 0 0 1 4.4 4.2M7.3 6.2h8.1M17.6 6.4v8.6M13.6 10.5h8.1" fill="none" stroke="#337e5a" stroke-width="2" stroke-linecap="butt"/></svg>
<div class="a" style="left:58.9px;top:748.9px;font-size:12.3px;color:#333;letter-spacing:-0.3px;-webkit-text-stroke:0.2px #333;">ORM-24</div>
<div class="a" style="left:161.2px;top:740.3px;width:715.5px;height:29.0px;background:#f4f4f4;border-radius:6px;"></div>
<div class="a" style="left:175.0px;top:749.0px;font-size:12.7px;color:#333;-webkit-text-stroke:0.2px #333;">proceso de verificación de listas de chequeo para la liquidación de nomina</div>
<div class="a" style="left:889.7px;top:744.2px;width:43.2px;height:21.3px;background:#ffbd45;border-radius:5px;"></div>
<div class="a" style="left:889.7px;top:749.8px;font-size:12.1px;color:#333;width:43.2px;text-align:center;letter-spacing:-0.2px;-webkit-text-stroke:0.2px #333;">49.18%</div>
<div class="a" style="left:945.9px;top:744.2px;width:74.1px;height:21.3px;background:#ffbd45;border-radius:5px;"></div>
<div class="a" style="left:945.9px;top:749.2px;font-size:12.8px;color:#333;width:74.1px;text-align:center;-webkit-text-stroke:0.2px #333;">regular</div>
<svg width="22" height="17" style="left:1055.1px;top:748.0px" viewBox="0 0 22 17"><path d="M10.3 1.8H5.9a4.4 4.4 0 0 0 0 8.8h4.4M12.4 1.8h3.9a4.4 4.4 0 0 1 4.4 4.2M7.3 6.2h8.1M17.6 6.4v8.6M13.6 10.5h8.1" fill="none" stroke="#337e5a" stroke-width="2" stroke-linecap="butt"/></svg>
<div class="a" style="left:58.9px;top:783.1px;font-size:12.3px;color:#333;letter-spacing:-0.3px;-webkit-text-stroke:0.2px #333;">ORM-25</div>
<div class="a" style="left:161.2px;top:774.5px;width:715.5px;height:29.0px;background:#f4f4f4;border-radius:6px;"></div>
<div class="a" style="left:175.0px;top:783.1px;font-size:12.7px;color:#333;-webkit-text-stroke:0.2px #333;">Verificar registros de formularios, antes de su envió</div>
<div class="a" style="left:889.7px;top:778.4px;width:43.2px;height:21.3px;background:#ffbd45;border-radius:5px;"></div>
<div class="a" style="left:889.7px;top:783.9px;font-size:12.1px;color:#333;width:43.2px;text-align:center;letter-spacing:-0.2px;-webkit-text-stroke:0.2px #333;">52.58%</div>
<div class="a" style="left:945.9px;top:778.4px;width:74.1px;height:21.3px;background:#ffbd45;border-radius:5px;"></div>
<div class="a" style="left:945.9px;top:783.3px;font-size:12.8px;color:#333;width:74.1px;text-align:center;-webkit-text-stroke:0.2px #333;">regular</div>
<svg width="22" height="17" style="left:1055.1px;top:782.2px" viewBox="0 0 22 17"><path d="M10.3 1.8H5.9a4.4 4.4 0 0 0 0 8.8h4.4M12.4 1.8h3.9a4.4 4.4 0 0 1 4.4 4.2M7.3 6.2h8.1M17.6 6.4v8.6M13.6 10.5h8.1" fill="none" stroke="#337e5a" stroke-width="2" stroke-linecap="butt"/></svg>
<div class="a" style="left:58.9px;top:817.2px;font-size:12.3px;color:#333;letter-spacing:-0.3px;-webkit-text-stroke:0.2px #333;">ORM-26</div>
<div class="a" style="left:161.2px;top:808.6px;width:715.5px;height:29.0px;background:#f4f4f4;border-radius:6px;"></div>
<div class="a" style="left:175.0px;top:817.3px;font-size:12.7px;color:#333;-webkit-text-stroke:0.2px #333;">Realizar conciliaciones bancarias</div>
<div class="a" style="left:889.7px;top:812.5px;width:43.2px;height:21.3px;background:#f2784b;border-radius:5px;"></div>
<div class="a" style="left:889.7px;top:818.1px;font-size:12.1px;color:#333;width:43.2px;text-align:center;letter-spacing:-0.2px;-webkit-text-stroke:0.2px #333;">29.02%</div>
<div class="a" style="left:945.9px;top:812.5px;width:74.1px;height:21.3px;background:#f2784b;border-radius:5px;"></div>
<div class="a" style="left:945.9px;top:817.5px;font-size:12.8px;color:#333;width:74.1px;text-align:center;-webkit-text-stroke:0.2px #333;">débil</div>
<svg width="22" height="17" style="left:1055.1px;top:816.3px" viewBox="0 0 22 17"><path d="M10.3 1.8H5.9a4.4 4.4 0 0 0 0 8.8h4.4M12.4 1.8h3.9a4.4 4.4 0 0 1 4.4 4.2M7.3 6.2h8.1M17.6 6.4v8.6M13.6 10.5h8.1" fill="none" stroke="#337e5a" stroke-width="2" stroke-linecap="butt"/></svg>
<div class="a" style="left:58.9px;top:851.3px;font-size:12.3px;color:#333;letter-spacing:-0.3px;-webkit-text-stroke:0.2px #333;">ORM-27</div>
<div class="a" style="left:161.2px;top:842.8px;width:715.5px;height:29.0px;background:#f4f4f4;border-radius:6px;"></div>
<div class="a" style="left:175.0px;top:851.4px;font-size:12.7px;color:#333;-webkit-text-stroke:0.2px #333;">Tomar el tiempo por actividades y operaciones</div>
<div class="a" style="left:889.7px;top:846.7px;width:43.2px;height:21.3px;background:#2ca86a;border-radius:5px;"></div>
<div class="a" style="left:889.7px;top:852.2px;font-size:12.1px;color:#333;width:43.2px;text-align:center;letter-spacing:-0.2px;-webkit-text-stroke:0.2px #333;">74.98%</div>
<div class="a" style="left:945.9px;top:846.7px;width:74.1px;height:21.3px;background:#2ca86a;border-radius:5px;"></div>
<div class="a" style="left:945.9px;top:851.6px;font-size:12.8px;color:#333;width:74.1px;text-align:center;-webkit-text-stroke:0.2px #333;">fuerte</div>
<svg width="22" height="17" style="left:1055.1px;top:850.5px" viewBox="0 0 22 17"><path d="M10.3 1.8H5.9a4.4 4.4 0 0 0 0 8.8h4.4M12.4 1.8h3.9a4.4 4.4 0 0 1 4.4 4.2M7.3 6.2h8.1M17.6 6.4v8.6M13.6 10.5h8.1" fill="none" stroke="#337e5a" stroke-width="2" stroke-linecap="butt"/></svg>
</div>
<div class="a" style="left:1630.0px;top:86.0px;width:10.0px;height:868.0px;background:#fafafa;"></div>
<div class="a" style="left:1630.5px;top:86.0px;width:9.5px;height:589.0px;background:#dedede;border-radius:5px;"></div>
<div class="a" style="left:345.0px;top:954.0px;width:1295.0px;height:73.0px;background:#f9f9fb;"></div>
<div class="a" style="left:1318.2px;top:983.4px;font-size:15.2px;color:#333;-webkit-text-stroke:0.43px #333;">Cancel</div>
<div class="a" style="left:1438.7px;top:971.0px;width:159.5px;height:38.8px;background:#4a9a74;border-radius:19.4px;"></div>
<div class="a" style="left:1438.7px;top:983.1px;font-size:15.4px;color:#fff;-webkit-text-stroke:0.43px #fff;width:159.5px;text-align:center;">Save changes</div>
</div>
</body></html>
